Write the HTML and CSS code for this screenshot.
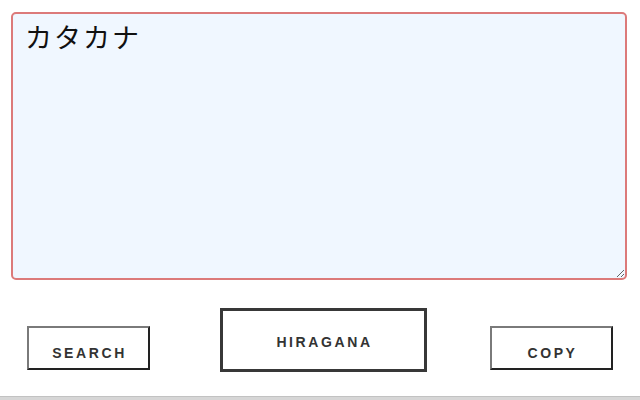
FILE: index.html
```html
<!DOCTYPE html>
<html lang="ja">
<head>
<meta charset="utf-8">
<title>カタカナ</title>
<link rel="stylesheet" href="styles.css">
</head>
<body>
<main class="app">
  <div class="editor-wrap">
    <textarea class="editor">カタカナ</textarea>
  </div>
  <div class="actions">
    <button class="btn btn-small btn-search">SEARCH</button>
    <button class="btn btn-main">HIRAGANA</button>
    <button class="btn btn-small btn-copy">COPY</button>
  </div>
  <div class="spacer"></div>
  <div class="bottom-bar"></div>
</main>
</body>
</html>
```
FILE: styles.css
```css
html, body {
  margin: 0;
  padding: 0;
  background: #ffffff;
}
.app {
  width: 640px;
  height: 400px;
  display: flex;
  flex-direction: column;
  overflow: hidden;
}
.editor-wrap {
  padding: 12px 13px 0 11px;
}
.editor {
  display: block;
  box-sizing: border-box;
  width: 616px;
  height: 268px;
  margin: 0;
  border: 2px solid #dc7a7a;
  border-radius: 5px;
  background: #f0f7ff;
  color: #111111;
  font-family: "Noto Sans CJK JP", "Liberation Sans", sans-serif;
  font-size: 27px;
  letter-spacing: 2px;
  line-height: 1.4;
  padding: 4px 12px;
  resize: both;
  outline: none;
}
.actions {
  display: flex;
  align-items: flex-start;
  padding: 28px 0 0 27px;
}
.btn {
  box-sizing: border-box;
  background: #ffffff;
  color: #333333;
  font-family: "Liberation Sans", Arial, sans-serif;
  font-weight: bold;
  font-size: 14px;
  letter-spacing: 2.6px;
  margin: 0;
  cursor: pointer;
}
.btn-small {
  width: 123px;
  height: 44px;
  margin-top: 18px;
  border-width: 2px;
  border-style: solid;
  border-color: #7a7a7a #222222 #222222 #7a7a7a;
  padding: 9px 0 0 2px;
}
.btn-main {
  width: 207px;
  height: 64px;
  border: 3px solid #383838;
  padding: 4px 0 0 2px;
  margin-left: 70px;
}
.btn-copy {
  margin-left: 63px;
}
.spacer {
  flex: 1;
}
.bottom-bar {
  height: 3px;
  background: #d6d6d6;
  border-top: 1px solid #c2c2c2;
}
```
